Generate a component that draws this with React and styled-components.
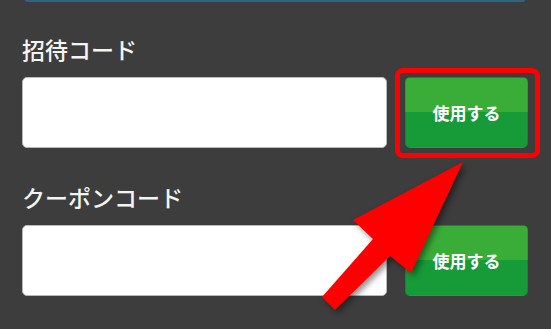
import React from "react";
import { styled, createGlobalStyle } from "styled-components";

const GlobalStyle = createGlobalStyle`
  html, body {
    margin: 0;
    padding: 0;
    background: #3d3d3d;
  }
  body {
    font-family: "Noto Sans CJK JP", "Noto Sans", sans-serif;
  }
`;

const CodeSection = ({ label, highlight }) => (
  <Section>
    <Label>{label}</Label>
    <Row>
      <CodeInput type="text" />
      <ButtonWrap>
        <UseButton>使用する</UseButton>
        {highlight && <Highlight />}
      </ButtonWrap>
    </Row>
  </Section>
);

const App = () => {
  return (
    <>
      <GlobalStyle />
      <Page>
        <TopEdge />
        <CodeSection label="招待コード" highlight />
        <CodeSection label="クーポンコード" />
        <Arrow viewBox="0 0 551 329" width="551" height="329">
          <polygon
            points="463,162 411,273 390,256 335,310 322,297 373,239 353,220"
            fill="#ff0000"
          />
        </Arrow>
      </Page>
    </>
  );
};

const Page = styled.div`
  position: relative;
  width: 551px;
  height: 329px;
  box-sizing: border-box;
  padding: 0 23px 0 22px;
  overflow: hidden;
`;
const TopEdge = styled.div`
  height: 2px;
  margin: 0 3px;
  background: #2b6488;
  border-radius: 0 0 2px 2px;
`;
const Section = styled.div`
  margin-top: 33px;
  & + & {
    margin-top: 35px;
  }
`;
const Label = styled.div`
  height: 28px;
  line-height: 28px;
  font-size: 23px;
  font-weight: 500;
  color: #f4f4f4;
  margin-bottom: 14px;
`;
const Row = styled.div`
  display: flex;
  align-items: center;
  gap: 18px;
  height: 71px;
`;
const CodeInput = styled.input`
  flex: 1;
  height: 71px;
  box-sizing: border-box;
  border: 1px solid #b8b8b8;
  border-radius: 5px;
  background: #ffffff;
  outline: none;
`;
const ButtonWrap = styled.div`
  position: relative;
  width: 123px;
  height: 71px;
`;
const UseButton = styled.button`
  width: 100%;
  height: 100%;
  border: 1px solid rgba(0, 0, 0, 0.12);
  border-radius: 5px;
  background: linear-gradient(#3aad39 0, #3aad39 50%, #179a38 50%, #179a38 100%);
  color: #ffffff;
  font-family: "Noto Sans CJK JP", sans-serif;
  font-size: 17px;
  font-weight: bold;
  padding: 0;
`;
const Highlight = styled.div`
  position: absolute;
  left: -10px;
  top: -9px;
  width: 145px;
  height: 90px;
  box-sizing: border-box;
  border: 5px solid #ff0000;
  border-radius: 8px;
`;
const Arrow = styled.svg`
  position: absolute;
  left: 0;
  top: 0;
  filter: drop-shadow(3px 3px 3px rgba(0, 0, 0, 0.45));
  pointer-events: none;
`;

export default App;
